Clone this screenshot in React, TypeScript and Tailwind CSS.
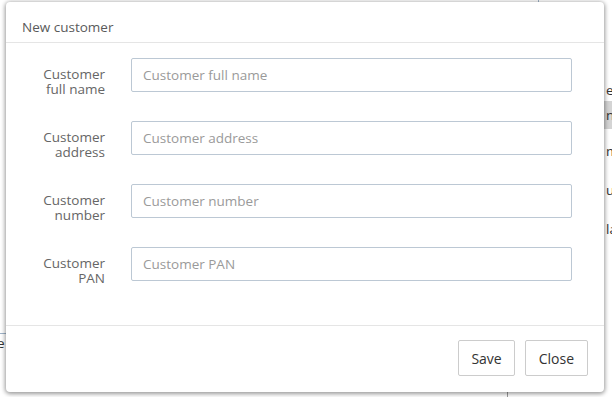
import React from "react";

const fields = [
  { label: ["Customer", "full name"], placeholder: "Customer full name" },
  { label: ["Customer", "address"], placeholder: "Customer address" },
  { label: ["Customer", "number"], placeholder: "Customer number" },
  { label: ["Customer", "PAN"], placeholder: "Customer PAN" },
];

export default function App() {
  return (
    <div
      className="relative w-[612px] h-[397px] overflow-hidden bg-white text-[13.5px] text-[#333]"
      style={{ fontFamily: '"Open Sans", "Noto Sans", sans-serif' }}
    >
      {/* page behind the dialog */}
      <div className="absolute left-[538px] top-0 w-px h-[3px] bg-[#9fb3c8]" />
      <div className="absolute left-[507px] top-[390px] w-px h-[7px] bg-[#999]" />
      <div className="absolute left-0 top-[333px] w-[8px] h-px bg-[#9fb3c8]" />
      <div className="absolute left-[-3px] top-[334px] leading-[18px] text-[#333]">e</div>
      <div className="absolute left-[604px] top-[80px] w-[40px] flex flex-col">
        <div className="h-[20px] leading-[20px] pl-[2px]">e</div>
        <div className="h-[28px] leading-[28px] pl-[2px] bg-[#d4d4d4] mt-[1px]">
          n<span className="text-[#b5651d]">s</span>
        </div>
        <div className="h-[39px] leading-[39px] pl-[2px] mt-[3px]">m</div>
        <div className="h-[39px] leading-[39px] pl-[2px]">u</div>
        <div className="h-[39px] leading-[39px] pl-[2px]">la</div>
      </div>

      {/* dialog */}
      <div className="absolute left-[6px] top-[2px] w-[598px] h-[390px] bg-white rounded-[4px] shadow-[0_1px_4px_1px_rgba(0,0,0,0.4)] flex flex-col">
        <div className="h-[41px] px-[16px] pt-[15px] leading-[20px] border-b border-[#e5e5e5] text-[#5a5a5a]">
          New customer
        </div>

        <div className="flex-1 pt-[15px] pr-[32px] flex flex-col gap-[29px]">
          {fields.map((f) => (
            <div key={f.placeholder} className="flex items-start h-[34px]">
              <div className="w-[99px] shrink-0 pt-[9px] text-right leading-[15px] text-[#666]">
                <div>{f.label[0]}</div>
                <div>{f.label[1]}</div>
              </div>
              <input
                className="ml-[26px] flex-1 h-[34px] px-[11px] border border-[#bcc8d4] rounded-[2px] text-[#333] placeholder:text-[#9a9a9a] outline-none"
                placeholder={f.placeholder}
              />
            </div>
          ))}
        </div>

        <div className="h-[67px] border-t border-[#e5e5e5] flex items-center justify-end gap-[10px] px-[16px] pb-[2px]">
          <button className="h-[36px] px-[12px] border border-[#cccccc] rounded-[2px] bg-white text-[#333] text-[14px]">
            Save
          </button>
          <button className="h-[36px] px-[13px] border border-[#cccccc] rounded-[2px] bg-white text-[#333] text-[14px]">
            Close
          </button>
        </div>
      </div>
    </div>
  );
}
